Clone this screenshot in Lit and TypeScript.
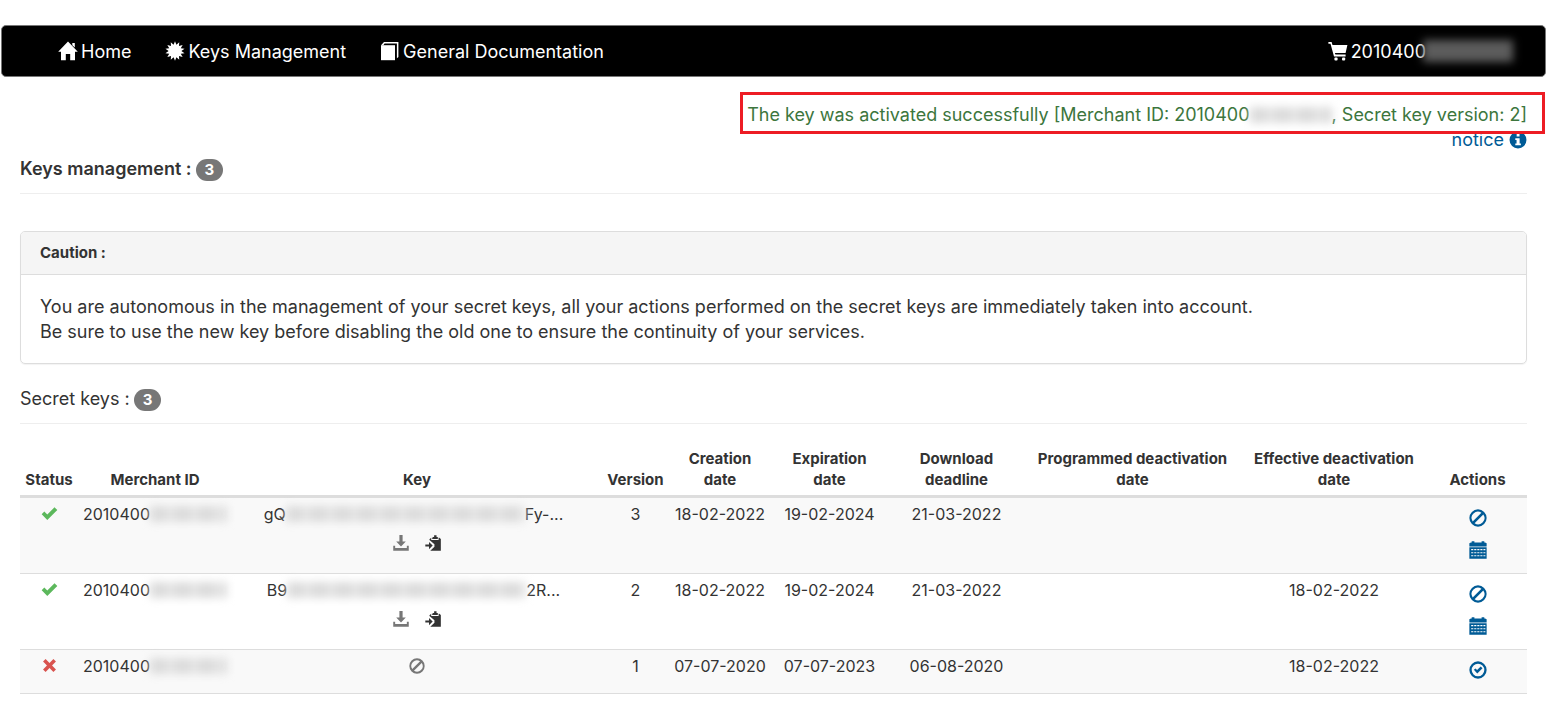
import { LitElement, html, css, svg, nothing } from "lit";
import { customElement, property } from "lit/decorators.js";

type IconName =
  | "home" | "burst" | "book" | "cart" | "info" | "ok" | "remove"
  | "download" | "paste" | "ban" | "calendar" | "okCircle";

const burstPoints = Array.from({ length: 28 }, (_, i) => {
  const r = i % 2 ? 6.4 : 9.8;
  const a = (i * Math.PI) / 14;
  return `${(10 + r * Math.sin(a)).toFixed(2)},${(10 - r * Math.cos(a)).toFixed(2)}`;
}).join(" ");

const shapes: Record<IconName, unknown> = {
  home: svg`<path d="M10 .6 19.8 10.8H17V19.2H12.2V13H7.8V19.2H3V10.8H.2Z"/><path d="M14.3 2H16.8V6.5L14.3 4.2Z"/>`,
  burst: svg`<polygon points=${burstPoints}/>`,
  book: svg`<path d="M1 4.2H15V19.2H1Z"/><path d="M1 4.2 4 1H18.4V16L16.9 17.2V2.6H4.6L3.3 4.2Z"/>`,
  cart: svg`<path d="M.4 1H3.6L4.5 4H19.4L17.6 12H6.9L7.4 13.6H17.6V15.4H6L2.5 2.8H.4Z"/><rect x="6.4" y="16.6" width="3.2" height="2.8" rx="1"/><rect x="14" y="16.6" width="3.2" height="2.8" rx="1"/>`,
  info: svg`<path fill-rule="evenodd" d="M10 .6A9.4 9.4 0 1 1 10 19.4 9.4 9.4 0 1 1 10 .6ZM8.5 3.4V6.2H11.7V3.4ZM7 8V9.9H8.4V13.8H7V15.8H13.2V13.8H11.8V8Z"/>`,
  ok: svg`<path d="M.8 10.8 3.9 7.7 7.4 11.2 15.9 2.7 19.2 6 7.4 17.6Z"/>`,
  remove: svg`<path d="M5.4 2.4 10 7 14.6 2.4 17.6 5.4 13 10 17.6 14.6 14.6 17.6 10 13 5.4 17.6 2.4 14.6 7 10 2.4 5.4Z"/>`,
  download: svg`<path d="M8 0H12V8H16L10 14.4 4 8H8Z"/><path d="M.3 13.4H2.7V16.4H17.3V13.4H19.7V19.6H.3Z"/>`,
  paste: svg`<path d="M10 2.4H11.4V.4H14.4V2.4H16V5H9V3.6Z"/><path d="M7.8 3.4V6.4H17V3.4H18L19.8 5V19.8H6.6L11.8 14.6V11.6L5.6 6.4V5.4Z"/><path d="M5 8.6 9.6 13.2 5 17.8V14.4H.4V12H5Z"/>`,
  ban: svg`<path fill-rule="evenodd" d="M10 .4A9.6 9.6 0 1 1 10 19.6 9.6 9.6 0 1 1 10 .4ZM13.8 4.1A7 7 0 0 0 4.1 13.8ZM15.9 6.2 6.2 15.9A7 7 0 0 0 15.9 6.2Z"/>`,
  calendar: svg`<path d="M.4 2.4 2.2 1.6H3V.4H6V1.6H14V.4H17V1.6H17.8L19.6 2.4V6H.4Z"/><path fill-rule="evenodd" d="M.4 7H19.6V19.8H.4ZM2.4 9V10.2H4.8V9ZM5.8 9V10.2H8.2V9ZM9.2 9V10.2H11.6V9ZM12.6 9V10.2H15V9ZM16 9V10.2H18.2V9ZM2.4 12.4V13.6H4.8V12.4ZM5.8 12.4V13.6H8.2V12.4ZM9.2 12.4V13.6H11.6V12.4ZM12.6 12.4V13.6H15V12.4ZM16 12.4V13.6H18.2V12.4ZM2.4 15.8V17H4.8V15.8ZM5.8 15.8V17H8.2V15.8ZM9.2 15.8V17H11.6V15.8ZM12.6 15.8V17H15V15.8ZM16 15.8V17H18.2V15.8Z"/>`,
  okCircle: svg`<path fill-rule="evenodd" d="M10 .4A9.6 9.6 0 1 1 10 19.6 9.6 9.6 0 1 1 10 .4ZM10 3A7 7 0 1 0 10 17 7 7 0 1 0 10 3Z"/><path d="M5.4 9.8 7.2 8.2 9 10 13 6 15 8 9.2 13.8Z"/>`,
};

@customElement("glyph-icon")
export class GlyphIcon extends LitElement {
  @property() name: IconName = "home";
  static styles = css`
    :host { display: inline-block; width: 18px; height: 18px; flex: none; }
    svg { display: block; width: 100%; height: 100%; fill: currentColor; }
  `;
  render() {
    return html`<svg viewBox="0 0 20 20" aria-hidden="true">${shapes[this.name]}</svg>`;
  }
}

interface SecretKey {
  active: boolean;
  keyStart?: string;
  keyEnd?: string;
  version: number;
  created: string;
  expires: string;
  deadline: string;
  deactivated?: string;
}

const MERCHANT = "2010400";

const keys: SecretKey[] = [
  { active: true, keyStart: "gQ", keyEnd: "Fy-...", version: 3, created: "18-02-2022", expires: "19-02-2024", deadline: "21-03-2022" },
  { active: true, keyStart: "B9", keyEnd: "2R...", version: 2, created: "18-02-2022", expires: "19-02-2024", deadline: "21-03-2022", deactivated: "18-02-2022" },
  { active: false, version: 1, created: "07-07-2020", expires: "07-07-2023", deadline: "06-08-2020", deactivated: "18-02-2022" },
];

const columns: [string, string][] = [
  ["Status", "c-status"],
  ["Merchant ID", "c-merchant"],
  ["Key", "c-key"],
  ["Version", "c-version"],
  ["Creation date", "c-created"],
  ["Expiration date", "c-expires"],
  ["Download deadline", "c-deadline"],
  ["Programmed deactivation date", "c-programmed"],
  ["Effective deactivation date", "c-effective"],
  ["Actions", "c-actions"],
];

@customElement("app-root")
export class AppRoot extends LitElement {
  static styles = css`
    :host {
      display: block;
      padding: 25px 9px 0 1px;
      font-family: Inter, "Liberation Sans", sans-serif;
      font-size: 18px;
      line-height: 25px;
      color: #333;
      background: #fff;
    }
    * { box-sizing: border-box; }
    a { color: #005b96; text-decoration: none; }
    button {
      display: flex; padding: 0; border: 0; background: none;
      color: inherit; font: inherit; cursor: pointer;
    }

    .navbar {
      display: flex; justify-content: space-between; align-items: center;
      height: 52px; padding: 0 32px 0 56px;
      background: #000; border: 1px solid #777; border-radius: 5px;
    }
    .menu { display: flex; gap: 34px; margin: 0; padding: 0; list-style: none; }
    .navlink { display: flex; align-items: center; gap: 3px; color: #fff; }
    .navlink glyph-icon { width: 20px; height: 20px; }

    .main { padding: 25px 19px 0 19px; }
    .notices { display: flex; flex-direction: column; align-items: flex-end; }
    .success { position: relative; color: #3c763d; }
    .success::after {
      content: ""; position: absolute; inset: -10px -18px -7px -7px;
      border: 3px solid #ed1c24;
    }
    .notice { display: flex; align-items: center; gap: 5px; }

    .masked {
      display: inline-block; height: 16px; vertical-align: -2px;
      background: repeating-linear-gradient(90deg, #dcdcdc 0 17px, #e6e6e6 17px 24px);
      filter: blur(4px);
    }
    .masked.account { width: 90px; height: 22px; margin-left: -6px; background: #5c5c5c; }
    .masked.alert { width: 82px; }
    .masked.merchant { width: 77px; }
    .masked.key { width: 239px; }

    h1, h2 {
      display: flex; align-items: center; gap: 4px; margin: 0;
      font-size: 18px; line-height: 25px;
      border-bottom: 1px solid #eee;
    }
    h1 { padding: 4px 0 12px; font-weight: 600; }
    h2 { margin-top: 22px; padding-bottom: 12px; font-weight: 400; }
    .badge {
      min-width: 27px; padding: 3px 9px; margin-top: 2px; border-radius: 11px;
      background: #777; color: #fff; text-align: center;
      font-size: 15px; line-height: 16px; font-weight: 700;
    }

    .panel {
      margin-top: 37px; border: 1px solid #ddd; border-radius: 5px;
      box-shadow: 0 1px 1px rgba(0, 0, 0, 0.05);
    }
    .panel-head {
      padding: 10px 19px 11px; background: #f5f5f5; border-bottom: 1px solid #ddd;
      border-radius: 4px 4px 0 0; font-size: 15px; line-height: 21px; font-weight: 700;
    }
    .panel-body { margin: 0; padding: 19px; }

    table {
      width: 100%; margin-top: 19px; table-layout: fixed;
      border-collapse: separate; border-spacing: 0;
    }
    .c-status { width: 58px; }
    .c-merchant { width: 154px; }
    .c-key { width: 370px; }
    .c-version { width: 67px; }
    .c-created { width: 102px; }
    .c-expires { width: 117px; }
    .c-deadline { width: 137px; }
    .c-programmed { width: 215px; }
    .c-effective { width: 188px; }
    .c-actions { width: 99px; }
    th {
      padding: 5px 4px; vertical-align: bottom; border-bottom: 3px solid #ddd;
      font-size: 15px; line-height: 21px; font-weight: 700;
    }
    th.c-created, th.c-expires, th.c-deadline { padding: 5px 15px; }
    td {
      padding: 5px; vertical-align: top; text-align: center; white-space: nowrap;
      border-bottom: 1px solid #ddd; font-size: 16px; line-height: 23px;
    }
    tbody tr:nth-child(odd) { background: #f9f9f9; }
    td glyph-icon { width: 16px; height: 16px; vertical-align: -2px; }
    td .ok, td .remove { width: 17px; height: 17px; }
    .ok { color: #5cb85c; }
    .remove { color: #d9534f; }
    .muted { color: #777; }
    .secret { padding-right: 7px; }
    .tools { display: flex; justify-content: center; gap: 16px; padding-top: 9px; }
    .actions {
      display: flex; flex-direction: column; align-items: center; gap: 2px;
      padding-bottom: 3px; color: #005b96;
    }
    .actions button { height: 30px; align-items: center; }
    .actions glyph-icon { width: 18px; height: 18px; }
  `;

  private row(k: SecretKey) {
    return html`<tr>
      <td>
        <glyph-icon class=${k.active ? "ok" : "remove"} name=${k.active ? "ok" : "remove"}
          role="img" aria-label=${k.active ? "Active" : "Inactive"}></glyph-icon>
      </td>
      <td>${MERCHANT}<span class="masked merchant"></span></td>
      <td>
        ${k.keyStart
          ? html`<div class="secret">${k.keyStart}<span class="masked key"></span>${k.keyEnd}</div>
              <div class="tools">
                <button class="muted" aria-label="Download key"><glyph-icon name="download"></glyph-icon></button>
                <button aria-label="Copy key"><glyph-icon name="paste"></glyph-icon></button>
              </div>`
          : html`<glyph-icon class="muted" name="ban"></glyph-icon>`}
      </td>
      <td>${k.version}</td>
      <td>${k.created}</td>
      <td>${k.expires}</td>
      <td>${k.deadline}</td>
      <td></td>
      <td>${k.deactivated ?? nothing}</td>
      <td>
        <div class="actions">
          ${k.active
            ? html`<button aria-label="Deactivate"><glyph-icon name="ban"></glyph-icon></button>
                <button aria-label="Schedule deactivation"><glyph-icon name="calendar"></glyph-icon></button>`
            : html`<button aria-label="Activate"><glyph-icon name="okCircle"></glyph-icon></button>`}
        </div>
      </td>
    </tr>`;
  }

  render() {
    return html`
      <nav class="navbar">
        <ul class="menu">
          <li><a class="navlink" href="#home"><glyph-icon name="home"></glyph-icon>Home</a></li>
          <li><a class="navlink" href="#keys"><glyph-icon name="burst"></glyph-icon>Keys Management</a></li>
          <li><a class="navlink" href="#docs"><glyph-icon name="book"></glyph-icon>General Documentation</a></li>
        </ul>
        <a class="navlink" href="#account"><glyph-icon name="cart"></glyph-icon><span>${MERCHANT}</span><span class="masked account"></span></a>
      </nav>
      <main class="main">
        <div class="notices">
          <div class="success" role="status">The key was activated successfully [Merchant ID: ${MERCHANT}<span class="masked alert"></span>, Secret key version: 2]</div>
          <a class="notice" href="#notice">notice <glyph-icon name="info"></glyph-icon></a>
        </div>
        <h1>Keys management : <span class="badge">3</span></h1>
        <section class="panel">
          <div class="panel-head">Caution :</div>
          <p class="panel-body">
            You are autonomous in the management of your secret keys, all your actions performed on the secret keys are immediately taken into account.<br />
            Be sure to use the new key before disabling the old one to ensure the continuity of your services.
          </p>
        </section>
        <h2>Secret keys : <span class="badge">3</span></h2>
        <table>
          <thead>
            <tr>${columns.map(([label, cls]) => html`<th class=${cls} scope="col">${label}</th>`)}</tr>
          </thead>
          <tbody>${keys.map((k) => this.row(k))}</tbody>
        </table>
      </main>
    `;
  }
}
